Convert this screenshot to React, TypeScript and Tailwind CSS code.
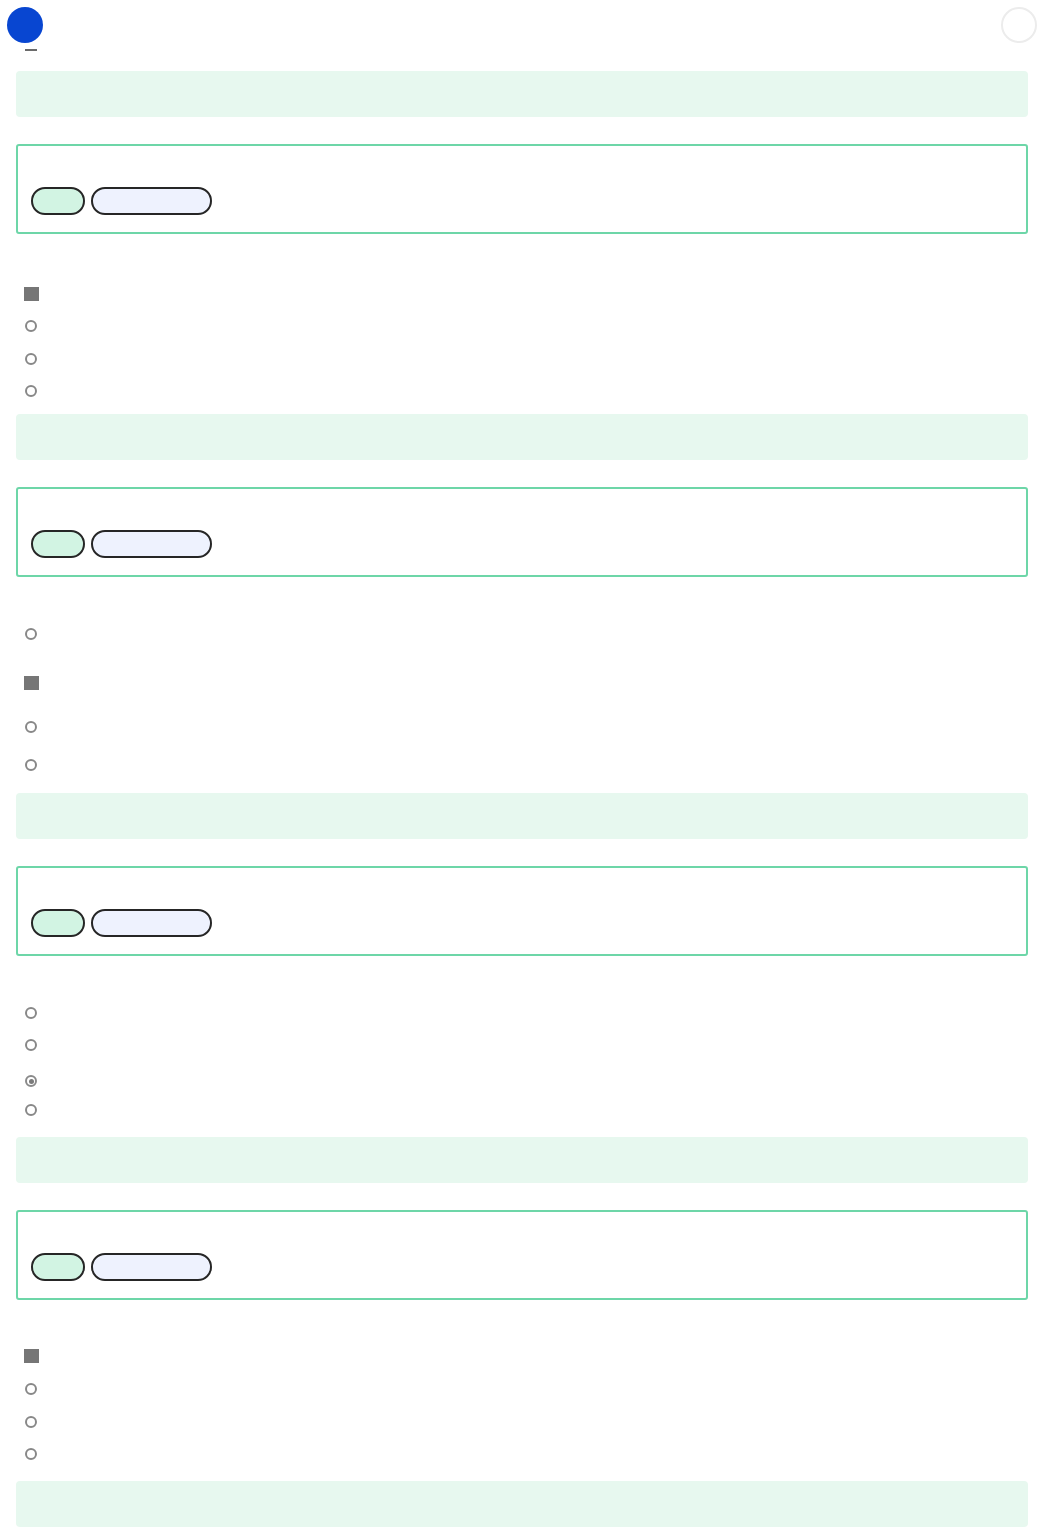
import React from 'react';

type Mark = 'square' | 'circle' | 'checked';
type Row = { mark: Mark; h: string };
type Section = { pt: string; pb: string; rows: Row[] };

const sections: Section[] = [
  {
    pt: 'pt-[44px]',
    pb: 'pb-[7px]',
    rows: [
      { mark: 'square', h: 'h-[32px]' },
      { mark: 'circle', h: 'h-[32px]' },
      { mark: 'circle', h: 'h-[33px]' },
      { mark: 'circle', h: 'h-[32px]' },
    ],
  },
  {
    pt: 'pt-[41px]',
    pb: 'pb-[1px]',
    rows: [
      { mark: 'circle', h: 'h-[32px]' },
      { mark: 'square', h: 'h-[66px]' },
      { mark: 'circle', h: 'h-[22px]' },
      { mark: 'circle', h: 'h-[54px]' },
    ],
  },
  {
    pt: 'pt-[41px]',
    pb: 'pb-[18px]',
    rows: [
      { mark: 'circle', h: 'h-[32px]' },
      { mark: 'circle', h: 'h-[32px]' },
      { mark: 'checked', h: 'h-[40px]' },
      { mark: 'circle', h: 'h-[18px]' },
    ],
  },
  {
    pt: 'pt-[40px]',
    pb: 'pb-[11px]',
    rows: [
      { mark: 'square', h: 'h-[32px]' },
      { mark: 'circle', h: 'h-[33px]' },
      { mark: 'circle', h: 'h-[33px]' },
      { mark: 'circle', h: 'h-[32px]' },
    ],
  },
];

const Marker: React.FC<{ mark: Mark }> = ({ mark }) => {
  if (mark === 'square') {
    return <span className="block w-[15px] h-[14px] bg-[#767676]" />;
  }
  if (mark === 'checked') {
    return (
      <span className="ml-[1px] flex items-center justify-center w-[12px] h-[12px] rounded-full border-2 border-[#8a8a8a] bg-white">
        <span className="block w-[5px] h-[5px] rounded-full bg-[#7a7a7a]" />
      </span>
    );
  }
  return <span className="ml-[1px] block w-[12px] h-[12px] rounded-full border-2 border-[#888]" />;
};

const Band: React.FC = () => <div className="h-[46px] rounded-[4px] bg-[#e7f8ef]" />;

const Card: React.FC = () => (
  <div className="mt-[27px] h-[90px] rounded-[3px] border-2 border-[#6dd6a8] px-[13px] pt-[41px]">
    <div className="flex gap-[6px]">
      <span className="block w-[54px] h-[28px] rounded-full border-2 border-[#262626] bg-[#d2f4e3]" />
      <span className="block w-[121px] h-[28px] rounded-full border-2 border-[#262626] bg-[#eef2fe]" />
    </div>
  </div>
);

export default function App() {
  return (
    <div className="min-h-screen bg-white font-['Liberation_Sans',sans-serif]">
      <header className="flex justify-between px-[7px] pt-[7px]">
        <div className="flex flex-col items-start">
          <span className="block w-[36px] h-[36px] rounded-full bg-[#0846d1]" />
          <span className="block ml-[18px] mt-[6px] w-[12px] h-[2px] bg-[#6b6b6b]" />
        </div>
        <span className="block w-[36px] h-[36px] rounded-full border-2 border-[#ececec]" />
      </header>
      <main className="px-4 pt-[20px]">
        {sections.map((s, i) => (
          <section key={i}>
            <Band />
            <Card />
            <ul className={`${s.pt} ${s.pb}`}>
              {s.rows.map((r, j) => (
                <li key={j} className={`${r.h} flex items-center pl-[8px]`}>
                  <Marker mark={r.mark} />
                </li>
              ))}
            </ul>
          </section>
        ))}
        <Band />
      </main>
    </div>
  );
}
